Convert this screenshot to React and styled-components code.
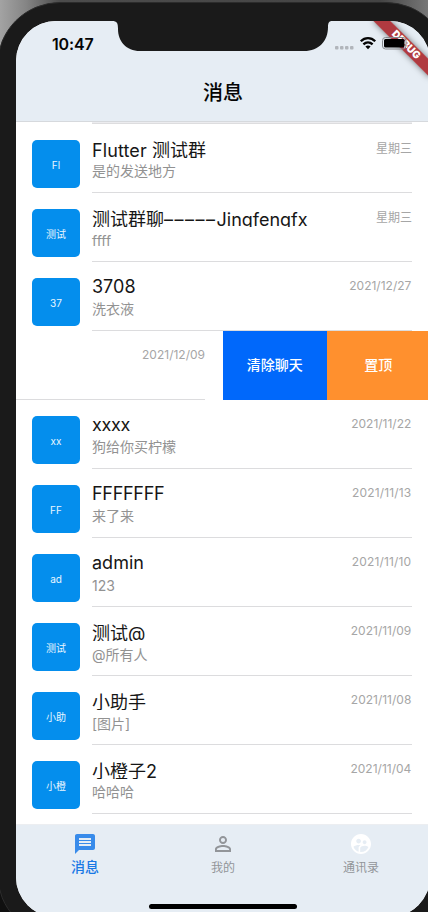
import React from "react";
import styled, { createGlobalStyle } from "styled-components";
import { MdMessage, MdPersonOutline, MdSupervisedUserCircle } from "react-icons/md";

const GlobalStyle = createGlobalStyle`
  html, body { margin: 0; padding: 0; overflow: hidden; }
  * { box-sizing: border-box; }
  body { font-family: Inter, "Noto Sans CJK SC", sans-serif; }
`;

const Desktop = styled.main`
  width: 428px;
  height: 912px;
  overflow: hidden;
  background:
    linear-gradient(90deg, #a3a3a3 0, #858585 26px, #4c4c4c 60px, #444 380px, #777 428px) 0 0 / 100% 80px no-repeat,
    #101010;
`;

const Device = styled.div`
  width: 452px;
  height: 935px;
  margin: 2px 0 0 -3px;
  padding: 18px;
  border: 1px solid #2c2c2c;
  border-radius: 63px;
  background: #1a1a1a;
`;

const Screen = styled.div`
  position: relative;
  display: flex;
  flex-direction: column;
  width: 414px;
  height: 896px;
  overflow: hidden;
  border-radius: 40px;
  background: #fff;
`;

const Header = styled.header`
  flex: none;
  height: 101px;
  background: #e6edf4;
  border-bottom: 1px solid #d6d9dd;
`;

const StatusBar = styled.div`
  position: relative;
  z-index: 2;
  display: flex;
  height: 44px;
`;

const Clock = styled.time`
  width: 96px;
  padding-left: 36px;
  font-size: 16px;
  font-weight: 600;
  letter-spacing: -0.15px;
  line-height: 46px;
  color: #050505;
`;

const Notch = styled.svg`
  flex: none;
  width: 220px;
  height: 30px;
`;

const StatusIcons = styled.svg`
  flex: none;
  width: 98px;
  height: 44px;
`;

const PageTitle = styled.h1`
  margin: 0;
  font-size: 20px;
  font-weight: 500;
  line-height: 57px;
  text-align: center;
  color: #050505;
`;

const DebugClip = styled.div`
  position: absolute;
  top: 0;
  right: 0;
  width: 80px;
  height: 80px;
  overflow: hidden;
`;

const DebugBanner = styled.div`
  position: absolute;
  top: 28px;
  left: 40px;
  width: 80px;
  height: 12px;
  transform-origin: 40px -28px;
  transform: rotate(45deg);
  background: rgba(166, 24, 29, 0.84);
  box-shadow: 0 0 6px rgba(0, 0, 0, 0.5);
  font-size: 10.2px;
  font-weight: 900;
  line-height: 11px;
  text-align: center;
  color: #fff;
`;

const List = styled.ul`
  flex: none;
  height: 702px;
  margin: 0;
  padding: 0;
  list-style: none;
  overflow: hidden;
`;

const TopRule = styled.li`
  height: 2px;
  margin: 0 18px 0 76px;
  border-bottom: 1px solid #dddddf;
  background: #ececef;
`;

const Conversation = styled.li`
  display: flex;
  width: 414px;
  height: 69px;
  padding: 0 18px 0 16px;
`;

const SwipedRow = styled.li`
  display: flex;
  justify-content: flex-end;
  height: 69px;
`;

const SwipedBody = styled.div`
  flex: none;
  display: flex;
  justify-content: flex-end;
  width: 189px;
  margin-right: 18px;
  border-bottom: 1px solid #dcdcde;
`;

const Action = styled.button`
  flex: none;
  width: 103.5px;
  height: 69px;
  padding: 0 0 1px;
  border: 0;
  background: ${(p) => p.$color};
  color: #fff;
  font: 500 14px/20px Inter, "Noto Sans CJK SC", sans-serif;
`;

const Avatar = styled.div`
  flex: none;
  width: 48px;
  height: 48px;
  margin: 16px 12px 0 0;
  border-radius: 5px;
  background: #048eed;
  color: #e9f6ff;
  font-size: 10px;
  line-height: 51px;
  text-align: center;
`;

const Content = styled.div`
  display: flex;
  flex: 1;
  justify-content: space-between;
  border-bottom: 1px solid #dcdcde;
`;

const Name = styled.div`
  height: 19px;
  margin-top: 15px;
  overflow: hidden;
  font-size: 18px;
  line-height: ${(p) => (p.$latin ? 19 : 23)}px;
  letter-spacing: ${(p) => p.$spacing || 0}px;
  white-space: nowrap;
  color: #161616;
`;

const Dashes = styled.span`
  letter-spacing: 1.5px;
`;

const Preview = styled.div`
  margin-top: ${(p) => (p.$raised ? 3 : 4)}px;
  font-size: 14px;
  line-height: 20px;
  color: #929292;
`;

const DateText = styled.time`
  margin-top: ${(p) => (p.$weekday ? 17 : 16)}px;
  margin-right: ${(p) => p.$inset || 0}px;
  font-size: 12px;
  line-height: 16px;
  letter-spacing: ${(p) => p.$spacing || 0}px;
  color: #a6a6a6;
`;

const TabBar = styled.nav`
  flex: 1;
  position: relative;
  display: flex;
  background: #e6edf4;
  border-top: 1px solid #eceef1;
`;

const Tab = styled.div`
  display: flex;
  flex-direction: column;
  flex: 1;
  align-items: center;
  padding-top: 7px;
  font-size: ${(p) => (p.$active ? 14 : 12)}px;
  font-weight: ${(p) => (p.$active ? 500 : 400)};
  line-height: ${(p) => (p.$active ? 21 : 24)}px;
  color: ${(p) => (p.$active ? "#1878e5" : "#929599")};

  svg {
    width: 24px;
    height: 24px;
    color: ${(p) => p.$icon};
  }
`;

const HomeIndicator = styled.div`
  position: absolute;
  left: 133px;
  bottom: 8px;
  width: 148px;
  height: 5px;
  border-radius: 3px;
  background: #000;
`;

const recent = [
  { id: 1, initials: "Fl", name: "Flutter 测试群", text: "是的发送地方", date: "星期三", raised: true, weekday: true, spacing: 0.1 },
  { id: 2, initials: "测试", name: <>测试群聊<Dashes>–––––</Dashes>Jingfengfx</>, text: "ffff", date: "星期三", weekday: true },
  { id: 3, initials: "37", name: "3708", text: "洗衣液", date: "2021/12/27", latin: true, raised: true },
];

const earlier = [
  { id: 4, initials: "xx", name: "xxxx", text: "狗给你买柠檬", date: "2021/11/22", latin: true, raised: true, spacing: -0.35 },
  { id: 5, initials: "FF", name: "FFFFFFF", text: "来了来", date: "2021/11/13", latin: true, raised: true, spacing: -0.3, dateSpacing: 0.15 },
  { id: 6, initials: "ad", name: "admin", text: "123", date: "2021/11/10", latin: true, dateSpacing: 0.15 },
  { id: 7, initials: "测试", name: "测试@", text: "@所有人", date: "2021/11/09" },
  { id: 8, initials: "小助", name: "小助手", text: "[图片]", date: "2021/11/08" },
  { id: 9, initials: "小橙", name: "小橙子2", text: "哈哈哈", date: "2021/11/04", raised: true },
];

function Row({ item }) {
  return (
    <Conversation>
      <Avatar>{item.initials}</Avatar>
      <Content>
        <div>
          <Name $latin={item.latin} $spacing={item.spacing}>{item.name}</Name>
          <Preview $raised={item.raised}>{item.text}</Preview>
        </div>
        <DateText $weekday={item.weekday} $inset={item.weekday ? 0 : 0.7} $spacing={item.dateSpacing}>
          {item.date}
        </DateText>
      </Content>
    </Conversation>
  );
}

export default function App() {
  return (
    <Desktop>
      <GlobalStyle />
      <Device>
        <Screen>
          <Header>
            <StatusBar>
              <Clock>10:47</Clock>
              <Notch viewBox="0 0 220 30">
                <path d="M0 0H220C217 0 216 2 216 6C216 20 207 30 192 30H28C14 30 6 20 6 8C6 2 5 0 0 0Z" fill="#1a1a1a" />
              </Notch>
              <StatusIcons viewBox="0 0 98 44">
                <g fill="#b1b5bb">
                  <rect x="3" y="25" width="3.5" height="3.5" rx="1" />
                  <rect x="8" y="25" width="3.5" height="3.5" rx="1" />
                  <rect x="13" y="25" width="3.5" height="3.5" rx="1" />
                  <rect x="18" y="25" width="3.5" height="3.5" rx="1" />
                </g>
                <g fill="none" stroke="#050505" strokeWidth="2.3">
                  <path d="M28.8 20.3C33 16.1 39 16.1 43.2 20.3" />
                  <path d="M31.4 23.4C34.2 20.7 37.8 20.7 40.6 23.4" />
                </g>
                <path d="M33.4 25.5C35 24.2 37 24.2 38.6 25.5L36 28.3Z" fill="#050505" />
                <rect x="50.5" y="16.5" width="23.5" height="11.5" rx="3" fill="none" stroke="#85888c" />
                <rect x="52" y="18" width="20.5" height="8.5" rx="1.5" fill="#000" />
              </StatusIcons>
            </StatusBar>
            <PageTitle>消息</PageTitle>
          </Header>
          <List>
            <TopRule />
            {recent.map((item) => <Row key={item.id} item={item} />)}
            <SwipedRow>
              <SwipedBody><DateText>2021/12/09</DateText></SwipedBody>
              <Action $color="#0068fb">清除聊天</Action>
              <Action $color="#ff902e">置顶</Action>
            </SwipedRow>
            {earlier.map((item) => <Row key={item.id} item={item} />)}
          </List>
          <TabBar>
            <Tab $active $icon="#388bea"><MdMessage />消息</Tab>
            <Tab $icon="#929599"><MdPersonOutline />我的</Tab>
            <Tab $icon="#fff"><MdSupervisedUserCircle />通讯录</Tab>
            <HomeIndicator />
          </TabBar>
          <DebugClip><DebugBanner>DEBUG</DebugBanner></DebugClip>
        </Screen>
      </Device>
    </Desktop>
  );
}
